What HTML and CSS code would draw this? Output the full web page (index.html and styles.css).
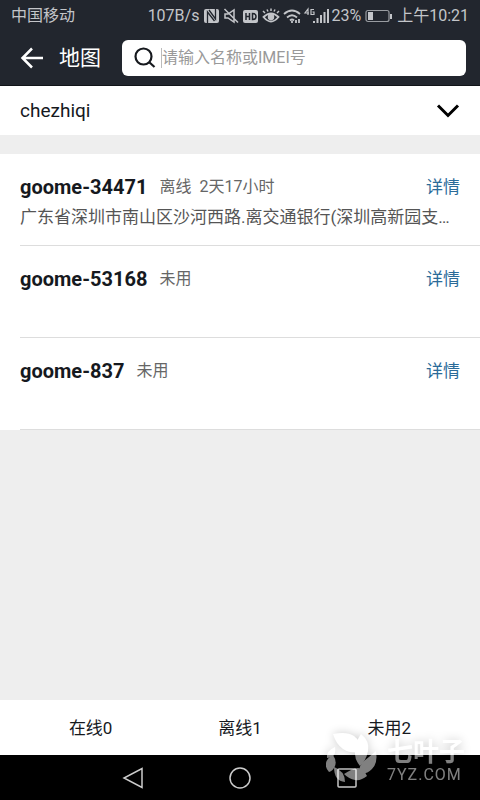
FILE: index.html
```html
<!DOCTYPE html>
<html lang="zh-CN">
<head>
<meta charset="utf-8">
<meta name="viewport" content="width=device-width, initial-scale=1">
<title>地图</title>
<link rel="stylesheet" href="styles.css">
</head>
<body>
<div class="status-bar">
  <span class="carrier">中国移动</span>
  <span class="speed">107B/s</span>
  <svg class="status-icons" width="126" height="20" viewBox="0 0 126 20" aria-hidden="true">
    <g fill="none" stroke="#c3c5c9" stroke-width="1.500">
      <rect x="1" y="3" width="15" height="14" rx="2" fill="#c3c5c9" stroke="none"/>
      <path stroke="#22262e" stroke-width="1.300" d="M4.500 17V6l7 9M6 4l6.500 9V3"/>
      <path d="M22 8h3l6-4v12l-6-4h-3zM21.500 3l13.500 13.500"/>
      <rect x="40" y="4" width="15" height="13" rx="2" fill="#c3c5c9" stroke="none"/>
      <path stroke="#22262e" d="M43 7v7M46.500 7v7M43 10.500h3.500M49.500 7.500v6q3.500 0 3.500-3t-3.500-3z"/>
      <path stroke-width="1.800" d="M60.500 11q7.500-7 15 0q-7.500 9-15 0z"/>
      <path d="M62 7l-2-2M65 5.500l-1-2M68 5V2.500M71 5.500l1-2M74 7l2-2"/>
      <circle cx="68" cy="11" r="2.500" fill="#c3c5c9"/>
      <path stroke-width="1.800" d="M81 8q8-7 16 0M84 11.500q5-4.500 10 0M87 14.500q2-2 4 0"/>
      <path d="M89 17v-2M93 17v-3M96 17v-4" stroke-width="1.800"/>
      <path stroke-width="1.200" d="M105 9V3l-3 4h4M111 3.500h-3v5h3V6h-1.500"/>
      <path stroke-width="2" d="M111 17v-2M114.500 17v-5M118 17v-8M121.500 17V6M125 17V3"/>
    </g>
  </svg>
  <span class="percent">23%</span>
  <svg class="battery" width="28" height="14" viewBox="0 0 28 14" aria-hidden="true">
    <rect x="1" y="1.500" width="23" height="11" rx="2" fill="none" stroke="#999ca1" stroke-width="1.200"/>
    <path d="M3 3h5v8H3zM25 5h2v5h-2z" fill="#c3c5c9"/>
  </svg>
  <span class="clock">上午10:21</span>
</div>
<header class="header">
  <button class="back" type="button" aria-label="返回">
    <svg width="24" height="22" viewBox="0 0 24 22" fill="none" stroke="#fff" stroke-width="2.500"><path d="M23 11H3M12 1.500L2.500 11l9.500 9.500"/></svg>
  </button>
  <h1 class="title">地图</h1>
  <label class="search">
    <svg width="22" height="22" viewBox="0 0 22 22" fill="none" stroke="#16191e" stroke-width="2.200"><circle cx="9.500" cy="9.500" r="8"/><path d="M15 15l5.500 5"/></svg>
    <input class="search-input" type="text" aria-label="搜索" placeholder="请输入名称或IMEI号">
  </label>
</header>
<main class="content">
  <button class="account" type="button">
    <span>chezhiqi</span>
    <svg width="24" height="14" viewBox="0 0 24 14" fill="none" stroke="#000" stroke-width="3"><path d="M2 1.500l10 10 10-10"/></svg>
  </button>
  <ul class="devices">
    <li class="device">
      <div class="device-head"><h2 class="name">goome-34471</h2><span class="state">离线</span><span class="duration">2天17小时</span><a class="detail" href="#">详情</a></div>
      <p class="address">广东省深圳市南山区沙河西路.离交通银行(深圳高新园支行)</p>
    </li>
    <li class="device">
      <div class="device-head"><h2 class="name">goome-53168</h2><span class="state">未用</span><a class="detail" href="#">详情</a></div>
    </li>
    <li class="device">
      <div class="device-head"><h2 class="name">goome-837</h2><span class="state">未用</span><a class="detail" href="#">详情</a></div>
    </li>
  </ul>
</main>
<footer class="bottom">
  <div class="tabs">
    <button class="tab" type="button">在线0</button>
    <button class="tab" type="button">离线1</button>
    <button class="tab" type="button">未用2</button>
  </div>
  <div class="nav">
    <button class="nav-key" type="button" aria-label="返回"><svg width="24" height="24" viewBox="0 0 24 24"><path d="M21 2.500v19L3 12z"/></svg></button>
    <button class="nav-key" type="button" aria-label="主页"><svg width="24" height="24" viewBox="0 0 24 24"><circle cx="12" cy="12" r="10"/></svg></button>
    <button class="nav-key" type="button" aria-label="最近任务"><svg width="24" height="24" viewBox="0 0 24 24"><rect x="3" y="3" width="18" height="18" rx="1"/></svg></button>
  </div>
  <div class="watermark">
    <svg width="52" height="52" viewBox="0 0 52 52" aria-hidden="true">
      <path d="M7 2q14-3 21 2t8 16q-12 2-19-3T7 2z"/>
      <path d="M35 2q9 7 7 17t-8 15q-6-7-5-16t6-16z"/>
      <path d="M50 19q2 12-4 18t-13 4q0-8 5-12t12-10z"/>
      <path d="M18 42q9-6 14-6t9 8q-6 5-12 4t-11-6z"/>
      <path d="M9 15q1 7-2 9t-6 2q-1-7 8-11z"/>
      <path d="M7 23q4 6 2 11t-6 6q-4-4-3-9t7-8z"/>
      <path d="M8 35q11 4 11 15q-11-1-11-15z"/>
    </svg>
    <div class="mark-text"><span class="mark-name">七叶子</span><span class="mark-site">7YZ.COM</span></div>
  </div>
</footer>
</body>
</html>
```
FILE: styles.css
```css
* {
  box-sizing: border-box;
}

body {
  margin: 0;
  min-height: 100vh;
  display: flex;
  flex-direction: column;
  background: #eee;
  color: #16191e;
  font-family: Roboto, "Noto Sans CJK SC", sans-serif;
  font-size: 18px;
  line-height: 24px;
}

button {
  margin: 0;
  padding: 0;
  border: 0;
  background: none;
  color: inherit;
  font: inherit;
}

svg {
  display: block;
  flex: none;
}

h1, h2, p, ul {
  margin: 0;
  padding: 0;
}

.status-bar {
  display: flex;
  align-items: center;
  height: 31px;
  padding: 0 11px;
  background: #22262e;
  color: #c3c5c9;
  font-size: 16px;
  white-space: nowrap;
}

.speed {
  margin-left: auto;
}

.status-icons {
  margin: 0 2px 0 4px;
}

.battery {
  margin: 0 4px;
}

.header {
  display: flex;
  align-items: center;
  height: 55px;
  padding: 2px 14px 2px 20px;
  background: #22262e;
  border-bottom: 1px solid #111419;
  color: #fff;
}

.title {
  margin: 0 21px 0 15px;
  font-size: 21px;
  font-weight: 400;
}

.search {
  flex: 1;
  display: flex;
  align-items: center;
  min-width: 0;
  height: 36px;
  padding: 0 12px;
  gap: 5px;
  background: #fff;
  border-radius: 6px;
}

.search-input {
  flex: 1;
  min-width: 0;
  height: 20px;
  padding: 0;
  border: 0;
  border-left: 1px solid #bbb;
  outline: 0;
  background: none;
  color: #16191e;
  font: inherit;
  font-size: 16px;
}

.search-input::placeholder {
  color: #999;
}

.content {
  flex: 1;
}

.account {
  display: flex;
  align-items: center;
  justify-content: space-between;
  width: 100%;
  height: 49px;
  margin-bottom: 19px;
  padding: 0 20px;
  background: #fff;
  font-size: 19px;
}

.devices {
  list-style: none;
  background: #fff;
}

.device {
  height: 92px;
  margin-left: 20px;
  padding: 19px 20px 0 0;
  border-bottom: 1px solid #ddd;
}

.device-head {
  display: flex;
  align-items: center;
  height: 28px;
}

.name {
  margin-right: 12px;
  font-size: 20px;
  font-weight: 700;
}

.state, .duration {
  margin-right: 8px;
  color: #666;
  font-size: 16px;
}

.detail {
  margin-left: auto;
  color: #2b6b99;
  font-size: 17px;
  text-decoration: none;
}

.address {
  overflow: hidden;
  color: #555;
  font-size: 17px;
  line-height: 32px;
  text-overflow: ellipsis;
  white-space: nowrap;
}

.bottom {
  position: relative;
}

.tabs {
  display: grid;
  grid-template-columns: repeat(3, 1fr);
  height: 55px;
  padding: 0 16px;
  background: #fff;
  font-size: 17px;
}

.nav {
  display: flex;
  justify-content: center;
  gap: 83px;
  height: 45px;
  background: #000;
}

.nav-key svg {
  fill: none;
  stroke: #ccc;
  stroke-width: 1.5;
}

.watermark {
  position: absolute;
  right: 15px;
  bottom: 16px;
  display: flex;
  align-items: flex-end;
  gap: 9px;
  color: #fff;
  filter: drop-shadow(0 0 5px rgba(0, 0, 0, 0.4));
  opacity: 0.5;
  pointer-events: none;
}

.watermark svg {
  fill: currentColor;
}

.mark-text {
  display: flex;
  flex-direction: column;
}

.mark-name {
  font-size: 26px;
  font-weight: 700;
  line-height: 28px;
}

.mark-site {
  font-size: 16px;
  letter-spacing: 1px;
  line-height: 18px;
}
```
